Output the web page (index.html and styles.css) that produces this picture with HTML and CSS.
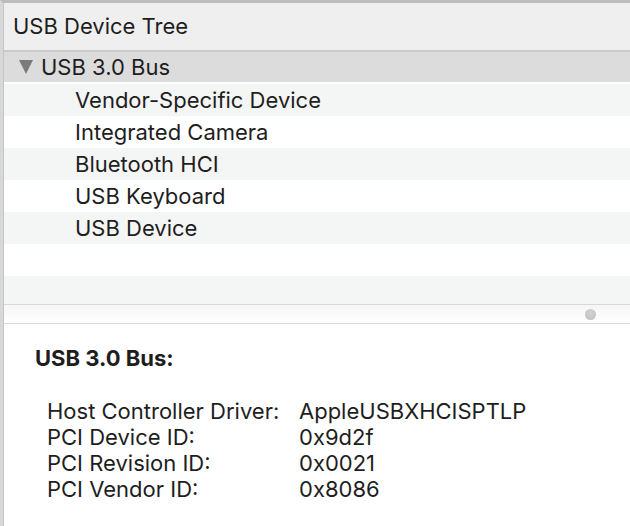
FILE: index.html
```html
<!DOCTYPE html>
<html>
<head>
<meta charset="utf-8">
<link rel="stylesheet" href="styles.css">
</head>
<body>
<div class="window">
  <div class="inner">
    <div class="header">USB Device Tree</div>
    <div class="tree">
      <div class="row bus"><span class="tri"></span><span>USB 3.0 Bus</span></div>
      <div class="row child alt">Vendor-Specific Device</div>
      <div class="row child">Integrated Camera</div>
      <div class="row child alt">Bluetooth HCI</div>
      <div class="row child">USB Keyboard</div>
      <div class="row child alt">USB Device</div>
      <div class="row"></div>
      <div class="row alt last"></div>
    </div>
    <div class="scroller"><span class="knob"></span></div>
    <div class="details">
      <div class="title">USB 3.0 Bus:</div>
      <div class="props">
        <div class="label">Host Controller Driver:</div><div class="value">AppleUSBXHCISPTLP</div>
        <div class="label">PCI Device ID:</div><div class="value">0x9d2f</div>
        <div class="label">PCI Revision ID:</div><div class="value">0x0021</div>
        <div class="label">PCI Vendor ID:</div><div class="value">0x8086</div>
      </div>
    </div>
  </div>
</div>
</body>
</html>
```
FILE: styles.css
```css
html, body {
  margin: 0;
  padding: 0;
  background: #ffffff;
}
body {
  width: 630px;
  height: 526px;
  overflow: hidden;
  font-family: Inter, "Liberation Sans", Arial, sans-serif;
  color: #1e1e1e;
}
.window {
  box-sizing: border-box;
  height: 526px;
  border-top: 3px solid #bcbcbc;
  border-left: 3px solid #d8d8d8;
}
.inner {
  height: 100%;
  border-left: 1px solid #c6c6c6;
}
.header {
  height: 47px;
  line-height: 47px;
  background: #efefef;
  border-bottom: 2px solid #cacaca;
  padding-left: 9px;
  font-size: 22px;
}
.row {
  height: 32px;
  line-height: 32px;
  font-size: 22px;
  background: #ffffff;
}
.row.alt {
  background: #f4f5f5;
}
.row.bus {
  height: 30px;
  line-height: 30px;
  margin-bottom: 2px;
  background: #dcdcdc;
  display: flex;
  align-items: center;
  padding-left: 15px;
}
.tri {
  width: 0;
  height: 0;
  border-left: 7.5px solid transparent;
  border-right: 7.5px solid transparent;
  border-top: 14px solid #7b7b7b;
  margin-right: 8px;
}
.row.child {
  padding-left: 71px;
}
.row.last {
  height: 28px;
}
.scroller {
  height: 18px;
  border-top: 1px solid #d9d9d9;
  border-bottom: 1px solid #d9d9d9;
  background: linear-gradient(#f6f6f6, #ffffff);
  display: flex;
  align-items: center;
  justify-content: flex-end;
  padding-right: 34px;
}
.knob {
  width: 11px;
  height: 11px;
  border-radius: 50%;
  background: radial-gradient(circle at 50% 40%, #d2d2d2, #bdbdbd);
}
.details {
  padding: 21px 0 0 31px;
  font-size: 22px;
}
.title {
  font-weight: bold;
  line-height: 26px;
  margin-bottom: 27px;
}
.props {
  display: grid;
  grid-template-columns: 252px auto;
  padding-left: 12px;
  line-height: 26px;
}
```
